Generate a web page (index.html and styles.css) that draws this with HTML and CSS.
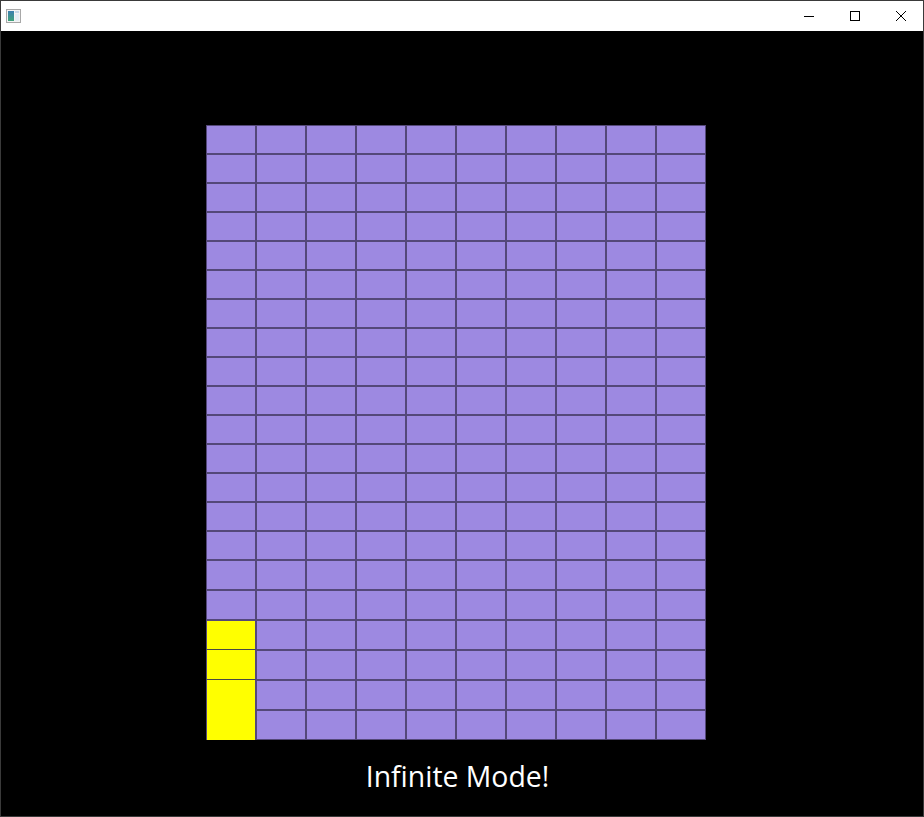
FILE: index.html
```html
<!DOCTYPE html>
<html>
<head>
<meta charset="utf-8">
<link rel="stylesheet" href="styles.css">
</head>
<body>
<div class="window">
  <div class="titlebar">
    <svg class="app-icon" width="15" height="14" viewBox="0 0 15 14">
      <defs>
        <linearGradient id="g" x1="0" y1="0" x2="0" y2="1">
          <stop offset="0" stop-color="#3d7fb0"/>
          <stop offset="1" stop-color="#3fa37a"/>
        </linearGradient>
      </defs>
      <rect x="0.5" y="0.5" width="14" height="13" fill="#f4f4f4" stroke="#a8a8a8"/>
      <rect x="2" y="2" width="6" height="10" fill="url(#g)"/>
      <rect x="9" y="2" width="4" height="2" fill="#c8d8e8"/>
      <rect x="9" y="5" width="4" height="7" fill="#e6eef4"/>
    </svg>
    <div class="controls">
      <div class="ctl"><svg width="10" height="10" viewBox="0 0 10 10"><path d="M0 5.5H10" stroke="#000" stroke-width="1"/></svg></div>
      <div class="ctl"><svg width="10" height="10" viewBox="0 0 10 10"><rect x="0.5" y="0.5" width="9" height="9" fill="none" stroke="#000" stroke-width="1"/></svg></div>
      <div class="ctl"><svg width="10" height="10" viewBox="0 0 10 10"><path d="M0 0L10 10M10 0L0 10" stroke="#000" stroke-width="1"/></svg></div>
    </div>
  </div>
  <div class="content">
    <div class="game">
      <div class="board" id="board"></div>
      <div class="caption">Infinite Mode!</div>
    </div>
  </div>
</div>
<script>
  var board = document.getElementById('board');
  for (var r = 1; r <= 21; r++) {
    for (var c = 1; c <= 10; c++) {
      if (c === 1 && r >= 18) {
        if (r === 21) continue;
        var y = document.createElement('div');
        y.className = 'cell yellow' + (r === 18 ? ' y-first' : r === 19 ? ' y-mid' : ' y-last');
        board.appendChild(y);
        continue;
      }
      var d = document.createElement('div');
      d.className = 'cell';
      board.appendChild(d);
    }
  }
</script>
</body>
</html>
```

FILE: styles.css
```css
html, body {
  margin: 0;
  padding: 0;
  background: #000;
}
.window {
  width: 924px;
  height: 817px;
  box-sizing: border-box;
  border: 1px solid #3a3a3a;
  display: flex;
  flex-direction: column;
  background: #000;
  overflow: hidden;
}
.titlebar {
  height: 30px;
  background: #fff;
  display: flex;
  align-items: center;
  justify-content: space-between;
  flex: none;
}
.app-icon {
  margin-left: 5px;
}
.controls {
  display: flex;
  height: 30px;
}
.ctl {
  width: 46px;
  height: 30px;
  display: flex;
  align-items: center;
  justify-content: center;
}
.ctl:last-child {
  width: 45px;
}
.content {
  flex: 1;
  background: #000;
  padding-top: 94px;
  padding-left: 205px;
}
.game {
  width: 500px;
  display: flex;
  flex-direction: column;
}
.board {
  display: grid;
  grid-template-columns: repeat(10, 50px);
  grid-template-rows: repeat(15, 29px) repeat(6, 30px);
}
.cell {
  background: #9d89e1;
  border: 1px solid #544879;
}
.yellow {
  background: #ffff00;
  grid-column: 1;
}
.y-first {
  grid-row: 18;
  border-bottom: 1px solid #4a4a44;
}
.y-mid {
  grid-row: 19;
  border-top: none;
  border-bottom: 1px solid #4a4a44;
}
.y-last {
  grid-row: 20 / span 2;
  border-top: none;
  border-bottom: none;
}
.caption {
  margin-top: 16px;
  color: #fff;
  font-family: "Open Sans", "Noto Sans", sans-serif;
  font-size: 28.4px;
  line-height: 40px;
  text-align: center;
  padding-left: 3px;
}
```
